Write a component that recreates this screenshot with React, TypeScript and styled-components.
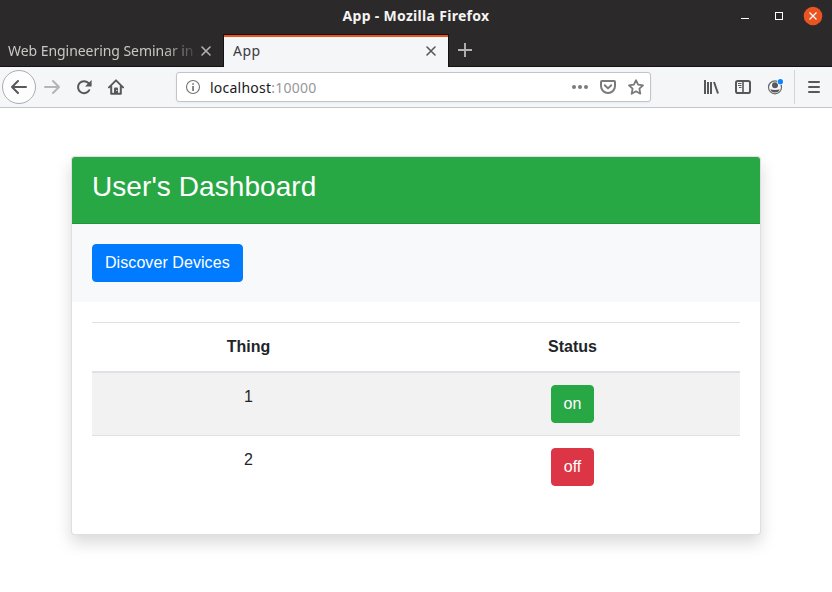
import React from "react";
import styled, { createGlobalStyle } from "styled-components";

const GlobalStyle = createGlobalStyle`
  *, *::before, *::after { box-sizing: border-box; }
  body {
    margin: 0;
    background: #fff;
    overflow: hidden;
  }
`;

const Window = styled.div`
  width: 832px;
  height: 592px;
  overflow: hidden;
  display: flex;
  flex-direction: column;
  background: #fff;
`;

const Chrome = styled.header`
  flex: none;
  font-family: "Noto Sans", "Open Sans", sans-serif;
`;

const TitleBar = styled.div`
  height: 34px;
  display: grid;
  grid-template-columns: 1fr auto 1fr;
  align-items: center;
  background: #2c292a;
`;

const WindowTitle = styled.div`
  grid-column: 2;
  color: #f5f4f2;
  font-size: 14px;
  font-weight: 700;
  line-height: 32px;
  height: 34px;
  letter-spacing: 0.3px;
`;

const WindowControls = styled.div`
  justify-self: end;
  display: flex;
  align-items: center;
  height: 34px;
  padding-right: 9px;
  padding-bottom: 2px;
`;

const TabStrip = styled.div`
  height: 33px;
  display: flex;
  background: #2c292a;
  box-shadow: inset 0 -1px #161013;
`;

const Tab = styled.div<{ $active?: boolean }>`
  width: ${(p) => (p.$active ? 226 : 223)}px;
  height: 33px;
  display: flex;
  align-items: center;
  justify-content: space-between;
  padding: ${(p) => (p.$active ? "0 11px 0 9px" : "0 11px 0 8px")};
  font-size: 14px;
  color: ${(p) => (p.$active ? "#3b3b3d" : "#c9c7c4")};
  background: ${(p) => (p.$active ? "#f5f6f8" : "transparent")};
  border: ${(p) => (p.$active ? "1px solid #161013" : "none")};
  border-bottom: 0;
  box-shadow: ${(p) => (p.$active ? "inset 0 2px #e95420" : "none")};
`;

const TabLabel = styled.span<{ $fade?: boolean }>`
  white-space: nowrap;
  overflow: hidden;
  line-height: 20px;
  letter-spacing: ${(p) => (p.$fade ? "-0.05px" : "0.45px")};
  width: ${(p) => (p.$fade ? "187px" : "auto")};
  mask-image: ${(p) =>
    p.$fade ? "linear-gradient(to right, #000 155px, transparent 192px)" : "none"};
`;

const NewTab = styled.div`
  width: 32px;
  height: 31px;
  display: grid;
  place-items: center;
`;

const Toolbar = styled.div`
  height: 41px;
  display: flex;
  align-items: center;
  background: #f5f6f8;
  border-bottom: 1px solid #c4c5cc;
`;

const BackButton = styled.div`
  width: 34px;
  height: 34px;
  margin-left: 2px;
  border: 1px solid #acacae;
  border-radius: 50%;
  background: #fdfdfd;
  display: grid;
  place-items: center;
`;

const ToolButton = styled.div`
  width: 32px;
  height: 32px;
  display: grid;
  place-items: center;
`;

const UrlBar = styled.div`
  width: 475px;
  height: 30px;
  margin-left: 44px;
  padding: 0 6px 0 8px;
  display: flex;
  align-items: center;
  border: 1px solid #c2c4cc;
  border-radius: 3px;
  background: #fff;
  box-shadow: 0 1px 3px rgba(0, 0, 0, 0.05);
`;

const Address = styled.span`
  flex: 1;
  margin-left: 9px;
  padding-top: 1px;
  font-size: 14px;
  line-height: 20px;
  color: #19191b;
  letter-spacing: 0.24px;
`;

const Port = styled.span`
  color: #98989b;
`;

const PageActions = styled.div`
  display: flex;
  gap: 12px;
`;

const RightTools = styled.div`
  display: flex;
  align-items: center;
  margin-left: 44px;
`;

const Separator = styled.div`
  width: 1px;
  height: 34px;
  margin: 0 3px;
  background: #d3d4d7;
`;

const Page = styled.main`
  flex: 1;
  padding-top: 48px;
  font-family: "Liberation Sans", Arial, sans-serif;
  font-size: 16px;
  line-height: 1.5;
  color: #212529;
`;

const Card = styled.section`
  width: 690px;
  margin: 0 auto;
  background: #fff;
  border: 1px solid rgba(0, 0, 0, 0.125);
  border-radius: 4px;
  box-shadow: 0 8px 16px rgba(0, 0, 0, 0.15);
`;

const CardHeader = styled.div`
  padding: 13px 20px 11px;
  color: #fff;
  background: #28a745;
  border-bottom: 1px solid rgba(0, 0, 0, 0.125);
  border-radius: 3px 3px 0 0;
`;

const CardTitle = styled.h3`
  margin: 0 0 8px;
  font-size: 28px;
  font-weight: 500;
  line-height: 1.2;
  letter-spacing: 0.07px;
`;

const Actions = styled.div`
  padding: 20px;
  display: flex;
  background: #f8f9fa;
`;

const CardBody = styled.div`
  padding: 20px;
`;

const Button = styled.button<{ $color: string; $spacing?: number }>`
  display: inline-block;
  padding: 6px 12px;
  font: inherit;
  letter-spacing: ${(p) => p.$spacing ?? 0}px;
  color: #fff;
  background: ${(p) => p.$color};
  border: 1px solid ${(p) => p.$color};
  border-radius: 4px;
  vertical-align: middle;
`;

const Table = styled.table`
  width: 100%;
  margin-bottom: 16px;
  table-layout: fixed;
  border-collapse: collapse;
  text-align: center;
`;

const HeadCell = styled.th<{ $width: number }>`
  width: ${(p) => p.$width}px;
  padding: 12px;
  border-top: 1px solid #dee2e6;
  border-bottom: 2px solid #dee2e6;
`;

const Row = styled.tr`
  &:nth-of-type(odd) {
    background: rgba(0, 0, 0, 0.05);
  }
`;

const Cell = styled.td`
  padding: 12px;
  vertical-align: top;
  border-top: 1px solid #dee2e6;
`;

const Close = ({ color }: { color: string }) => (
  <svg width="12" height="12" viewBox="0 0 12 12" stroke={color} strokeWidth="1.6" strokeLinecap="round">
    <path d="M2 2l8 8M10 2l-8 8" />
  </svg>
);

const Arrow = ({ color, flip }: { color: string; flip?: boolean }) => (
  <svg width="16" height="16" viewBox="0 0 16 16" fill="none" stroke={color} strokeWidth="2" strokeLinecap="round" strokeLinejoin="round">
    <path d={flip ? "M1 8h14M9 2l6 6-6 6" : "M15 8H1M7 2L1 8l6 6"} />
  </svg>
);

const ReloadIcon = () => (
  <svg width="16" height="16" viewBox="0 0 16 16">
    <path d="M13.2 11.2A6 6 0 1 1 12.4 4" fill="none" stroke="#58585a" strokeWidth="2" strokeLinecap="round" />
    <path d="M15.6 1v6a.6.6 0 0 1-.6.6H9z" fill="#58585a" />
  </svg>
);

const HomeIcon = () => (
  <svg width="16" height="16" viewBox="0 0 16 16">
    <path d="M1 8.4L8 1.4l7 7" fill="none" stroke="#58585a" strokeWidth="2" strokeLinecap="round" strokeLinejoin="round" />
    <path d="M3.2 7v7.8h9.6V7" fill="none" stroke="#58585a" strokeWidth="2" strokeLinejoin="round" />
    <path d="M6 15V9.5q0-1 1-1h2q1 0 1 1V15z" fill="#58585a" />
    <path d="M8.3 11h1v1h-1z" fill="#f5f6f8" />
  </svg>
);

const InfoIcon = () => (
  <svg width="16" height="16" viewBox="0 0 16 16">
    <circle cx="8" cy="8" r="6.5" fill="none" stroke="#737375" strokeWidth="1.1" />
    <path d="M7.2 7h1.7v5H7.2zM7.2 4.2h1.7v1.6H7.2z" fill="#737375" />
  </svg>
);

const DotsIcon = () => (
  <svg width="16" height="16" viewBox="0 0 16 16" fill="#7a7a7c">
    <circle cx="2" cy="8" r="2" />
    <circle cx="8" cy="8" r="2" />
    <circle cx="14" cy="8" r="2" />
  </svg>
);

const PocketIcon = () => (
  <svg width="16" height="16" viewBox="0 0 16 16" fill="none" stroke="#7a7a7c" strokeWidth="2" strokeLinecap="round" strokeLinejoin="round">
    <path d="M2 2h12q1 0 1 1v4a7 7 0 0 1-14 0V3q0-1 1-1z" />
    <path d="M4.8 6.3L8 9.4l3.2-3.1" />
  </svg>
);

const StarIcon = () => (
  <svg width="16" height="16" viewBox="0 0 16 16" fill="none" stroke="#7a7a7c" strokeWidth="1.8" strokeLinejoin="round">
    <path d="M8 1.2l2.1 4.4 4.9.7-3.6 3.4.9 5L8 12.3l-4.3 2.4.9-5L1 6.3l4.9-.7z" />
  </svg>
);

const LibraryIcon = () => (
  <svg width="16" height="16" viewBox="0 0 16 16" fill="none" stroke="#58585a" strokeWidth="2">
    <path d="M2 1v14M5 3v12M8 3v12" />
    <path d="M11 3l4 11.5" />
  </svg>
);

const SidebarIcon = () => (
  <svg width="16" height="16" viewBox="0 0 16 16" fill="none" stroke="#58585a">
    <rect x="1" y="2" width="14" height="12" rx="1.8" strokeWidth="2" />
    <path d="M8 2v12" strokeWidth="1.6" />
    <path d="M3 4.5h3.5M3 6.5h3.5M4 8.5h2.5" strokeWidth="1" />
  </svg>
);

const AccountIcon = () => (
  <svg width="18" height="16" viewBox="0 0 18 16">
    <circle cx="9" cy="8.3" r="6.5" fill="none" stroke="#68686a" strokeWidth="1.2" />
    <circle cx="9" cy="6.2" r="3" fill="#58585a" />
    <path d="M4.3 10.2q2 .8 4.7.8t4.7-.8q-1 3.3-4.7 3.3t-4.7-3.3z" fill="#58585a" />
    <circle cx="14.4" cy="2.7" r="3.2" fill="#f5f6f8" />
    <circle cx="14.4" cy="2.7" r="2.6" fill="#0a84ff" />
  </svg>
);

const MenuIcon = () => (
  <svg width="14" height="14" viewBox="0 0 14 14" stroke="#58585a" strokeWidth="2" strokeLinecap="round">
    <path d="M2 2h10M2 7h10M2 12h10" />
  </svg>
);

const ControlIcons = () => (
  <svg width="84" height="20" viewBox="0 0 84 20" fill="none">
    <path d="M2 12.5h8" stroke="#fff" strokeWidth="1" />
    <rect x="36.5" y="6.5" width="7" height="7" stroke="#fff" />
    <circle cx="74" cy="10" r="9.3" fill="#e95420" />
    <path d="M70.5 6.5l7 7M77.5 6.5l-7 7" stroke="#fff" strokeWidth="1.2" />
  </svg>
);

const devices = [
  { id: 1, status: "on", color: "#28a745" },
  { id: 2, status: "off", color: "#dc3545" },
];

export default function App() {
  return (
    <Window>
      <GlobalStyle />
      <Chrome>
        <TitleBar>
          <WindowTitle>App - Mozilla Firefox</WindowTitle>
          <WindowControls>
            <ControlIcons />
          </WindowControls>
        </TitleBar>
        <TabStrip>
          <Tab>
            <TabLabel $fade>Web Engineering Seminar in</TabLabel>
            <Close color="#b5b3b1" />
          </Tab>
          <Tab $active>
            <TabLabel>App</TabLabel>
            <Close color="#58585a" />
          </Tab>
          <NewTab>
            <svg width="14" height="14" viewBox="0 0 14 14" stroke="#b5b3b1" strokeWidth="1.9">
              <path d="M7 0v14M0 7h14" />
            </svg>
          </NewTab>
        </TabStrip>
        <Toolbar>
          <BackButton>
            <Arrow color="#58585a" />
          </BackButton>
          <ToolButton>
            <Arrow color="#b4b5b7" flip />
          </ToolButton>
          <ToolButton>
            <ReloadIcon />
          </ToolButton>
          <ToolButton>
            <HomeIcon />
          </ToolButton>
          <UrlBar>
            <InfoIcon />
            <Address>
              localhost<Port>:10000</Port>
            </Address>
            <PageActions>
              <DotsIcon />
              <PocketIcon />
              <StarIcon />
            </PageActions>
          </UrlBar>
          <RightTools>
            <ToolButton>
              <LibraryIcon />
            </ToolButton>
            <ToolButton>
              <SidebarIcon />
            </ToolButton>
            <ToolButton>
              <AccountIcon />
            </ToolButton>
            <Separator />
            <ToolButton>
              <MenuIcon />
            </ToolButton>
          </RightTools>
        </Toolbar>
      </Chrome>
      <Page>
        <Card>
          <CardHeader>
            <CardTitle>User's Dashboard</CardTitle>
          </CardHeader>
          <Actions>
            <Button $color="#007bff" $spacing={0.07}>Discover Devices</Button>
          </Actions>
          <CardBody>
            <Table>
              <thead>
                <tr>
                  <HeadCell $width={313}>Thing</HeadCell>
                  <HeadCell $width={335}>Status</HeadCell>
                </tr>
              </thead>
              <tbody>
                {devices.map((d) => (
                  <Row key={d.id}>
                    <Cell>{d.id}</Cell>
                    <Cell>
                      <Button $color={d.color}>{d.status}</Button>
                    </Cell>
                  </Row>
                ))}
              </tbody>
            </Table>
          </CardBody>
        </Card>
      </Page>
    </Window>
  );
}
